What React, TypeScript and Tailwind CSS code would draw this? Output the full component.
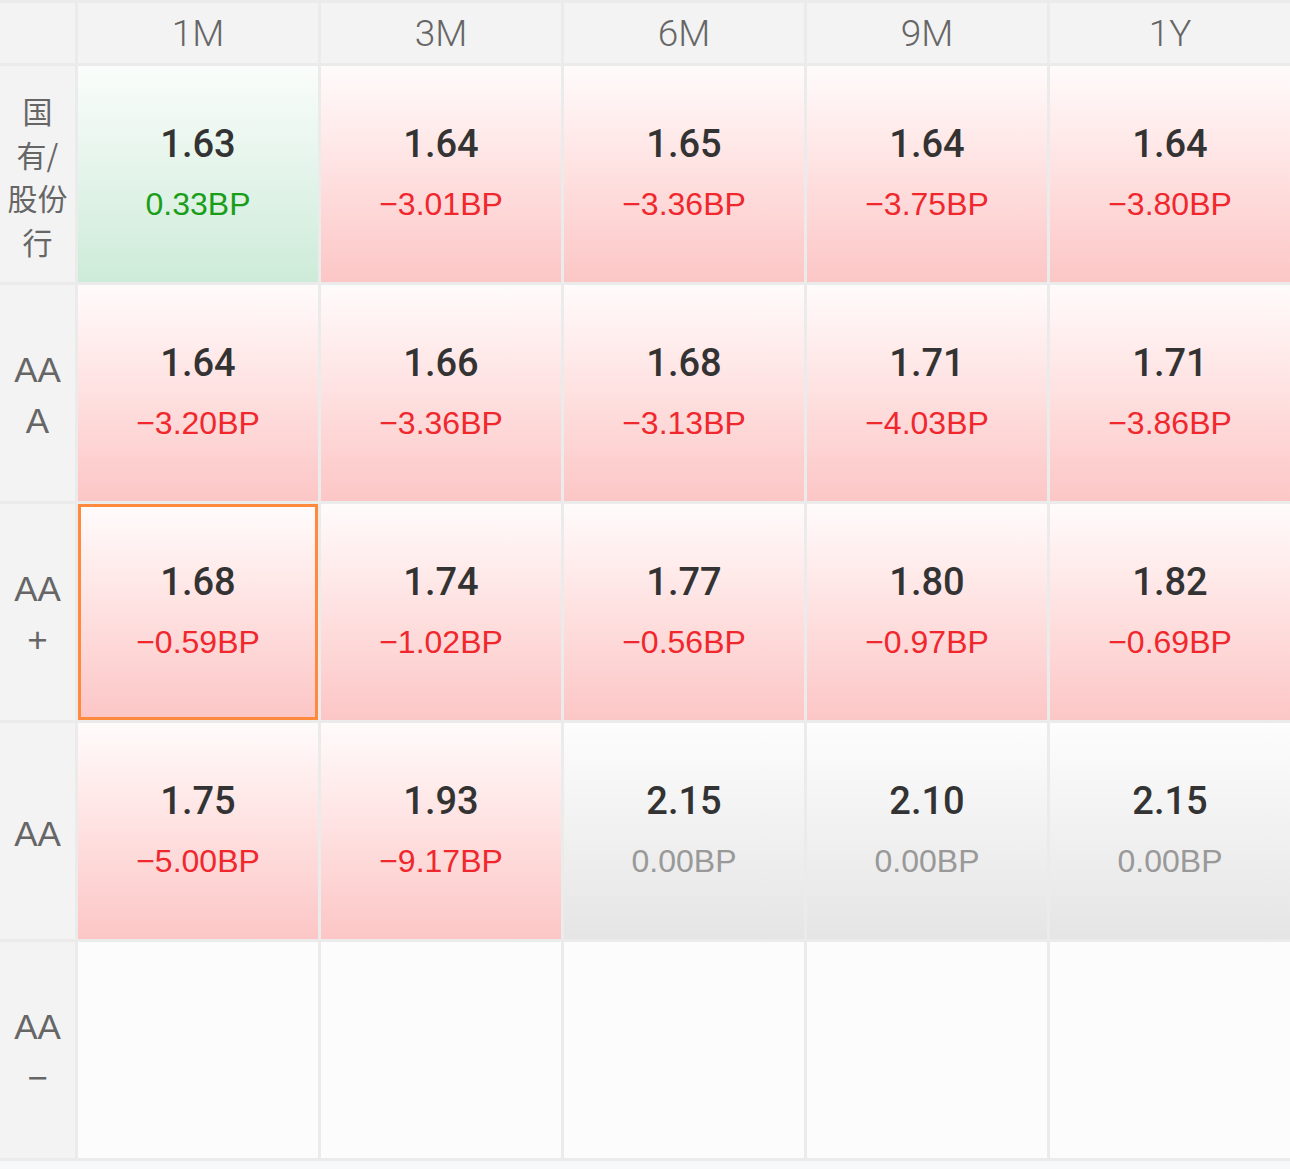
import React from "react"

type Tone = "red" | "green" | "gray" | "empty"

interface Cell {
  value?: string
  change?: string
  tone: Tone
  selected?: boolean
}

interface Row {
  label: string[]
  cjk?: boolean
  cells: Cell[]
}

const TERMS = ["1M", "3M", "6M", "9M", "1Y"]

const r = (value: string, change: string, selected = false): Cell => ({ value, change, tone: "red", selected })
const g = (value: string, change: string): Cell => ({ value, change, tone: "gray" })
const empty: Cell = { tone: "empty" }

const ROWS: Row[] = [
  {
    label: ["国", "有/", "股份", "行"],
    cjk: true,
    cells: [
      { value: "1.63", change: "0.33BP", tone: "green" },
      r("1.64", "−3.01BP"),
      r("1.65", "−3.36BP"),
      r("1.64", "−3.75BP"),
      r("1.64", "−3.80BP"),
    ],
  },
  {
    label: ["AA", "A"],
    cells: [r("1.64", "−3.20BP"), r("1.66", "−3.36BP"), r("1.68", "−3.13BP"), r("1.71", "−4.03BP"), r("1.71", "−3.86BP")],
  },
  {
    label: ["AA", "+"],
    cells: [r("1.68", "−0.59BP", true), r("1.74", "−1.02BP"), r("1.77", "−0.56BP"), r("1.80", "−0.97BP"), r("1.82", "−0.69BP")],
  },
  {
    label: ["AA"],
    cells: [r("1.75", "−5.00BP"), r("1.93", "−9.17BP"), g("2.15", "0.00BP"), g("2.10", "0.00BP"), g("2.15", "0.00BP")],
  },
  {
    label: ["AA", "−"],
    cells: [empty, empty, empty, empty, empty],
  },
]

const toneBg: Record<Tone, string> = {
  red: "bg-linear-to-b from-[#fffbfb] to-[#fcc6c6]",
  green: "bg-linear-to-b from-[#fafdfb] to-[#cdebd9]",
  gray: "bg-linear-to-b from-[#fdfdfd] to-[#e5e5e5]",
  empty: "bg-[#fcfcfc]",
}

const changeColor: Record<Tone, string> = {
  red: "text-[#f0282d]",
  green: "text-[#1a9e1a]",
  gray: "text-[#999999]",
  empty: "",
}

const RateCell: React.FC<{ cell: Cell }> = ({ cell }) => (
  <div
    className={`h-[216px] flex flex-col items-center justify-center gap-[12px] ${toneBg[cell.tone]} ${
      cell.selected ? "border-[3px] border-[#ff8a3d]" : ""
    }`}
  >
    {cell.value && (
      <>
        <div className="text-[38px] leading-[48px] font-medium text-[#333333]">{cell.value}</div>
        <div className={`text-[32px] leading-[48px] font-['Liberation_Sans',sans-serif] ${changeColor[cell.tone]}`}>
          {cell.change}
        </div>
      </>
    )}
  </div>
)

export default function App() {
  return (
    <div className="w-[1290px] h-[1169px] bg-[#f7f8fa] overflow-hidden font-['Roboto','Liberation_Sans','Noto_Sans_CJK_SC',sans-serif]">
      <div className="bg-[#ebebeb] py-[3px]">
        <div className="grid grid-cols-[75px_repeat(5,240px)] gap-[3px]">
          <div className="h-[60px] bg-[#f3f3f3]" />
          {TERMS.map((t) => (
            <div key={t} className="h-[60px] bg-[#f3f3f3] flex items-center justify-center pt-[2px] text-[37px] font-light text-[#666666]">
              {t}
            </div>
          ))}

          {ROWS.map((row, i) => (
            <React.Fragment key={i}>
              <div className="h-[216px] bg-[#f3f3f3] flex flex-col items-center justify-center pt-[4px] text-[#666666]">
                {row.label.map((line, j) =>
                  row.cjk ? (
                    <div key={j} className="text-[30px] leading-[43.5px] font-['Noto_Sans_CJK_SC',sans-serif]">
                      {line}
                    </div>
                  ) : (
                    <div key={j} className="text-[35px] leading-[51px] font-['Liberation_Sans',sans-serif]">
                      {line}
                    </div>
                  )
                )}
              </div>
              {row.cells.map((cell, j) => (
                <RateCell key={j} cell={cell} />
              ))}
            </React.Fragment>
          ))}
        </div>
      </div>
    </div>
  )
}
